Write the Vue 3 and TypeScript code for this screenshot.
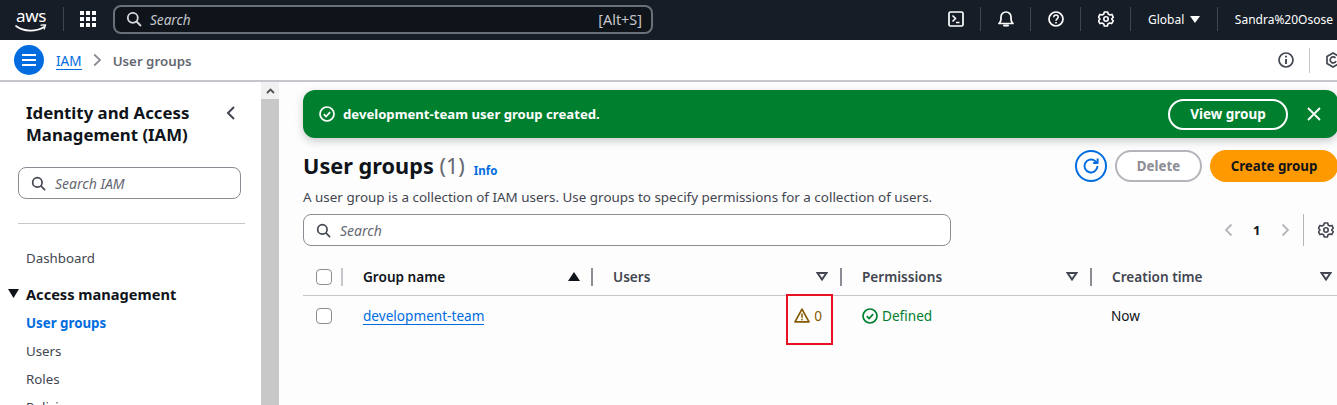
<script setup lang="ts">
interface Column {
  label: string;
  sorted?: boolean;
}

const columns: Column[] = [
  { label: 'Group name', sorted: true },
  { label: 'Users' },
  { label: 'Permissions' },
  { label: 'Creation time' },
];

const navItems = ['Users', 'Roles', 'Policies'];
</script>

<template>
  <div class="page">
    <header class="topbar">
      <div class="aws-logo">
        <span class="aws-word">aws</span>
        <svg class="aws-smile" width="32" height="9" viewBox="0 0 32 9" fill="none">
          <path d="M1 2c8 6 20 6 28 1" stroke="#fff" stroke-width="1.6" stroke-linecap="round" />
          <path d="M26 1.2l4.6-.4-1.4 4.2" stroke="#fff" stroke-width="1.3" stroke-linecap="round" stroke-linejoin="round" />
        </svg>
      </div>
      <span class="top-sep first"></span>
      <svg class="grid-icon" width="16" height="16" viewBox="0 0 16 16" fill="#fff">
        <rect x="0" y="0" width="4" height="4" /><rect x="6" y="0" width="4" height="4" /><rect x="12" y="0" width="4" height="4" />
        <rect x="0" y="6" width="4" height="4" /><rect x="6" y="6" width="4" height="4" /><rect x="12" y="6" width="4" height="4" />
        <rect x="0" y="12" width="4" height="4" /><rect x="6" y="12" width="4" height="4" /><rect x="12" y="12" width="4" height="4" />
      </svg>
      <div class="top-search">
        <svg width="16" height="16" viewBox="0 0 16 16" fill="none" stroke="#d5dbdb" stroke-width="1.8"><circle cx="6.8" cy="6.8" r="5" /><path d="M10.5 10.5l4.5 4.5" /></svg>
        <span class="top-search-text">Search</span>
        <span class="top-search-key">[Alt+S]</span>
      </div>
      <div class="top-right">
        <svg class="top-icon" width="16" height="16" viewBox="0 0 16 16" fill="none" stroke="#fff" stroke-width="1.7"><rect x="1" y="1" width="14" height="14" rx="1.5" /><path d="M4.5 4.5L7.5 7.5 4.5 10.5M8 11.5h3.5" stroke-width="1.5" /></svg>
        <span class="top-sep"></span>
        <svg class="top-icon" width="16" height="16" viewBox="0 0 16 16" fill="none" stroke="#fff" stroke-width="1.7"><path d="M1 12.5h14c-1.5-1.4-2-2.5-2-4.5V6A5 5 0 0 0 3 6v2c0 2-.5 3.1-2 4.5z" stroke-linejoin="round" /><path d="M6 14.6h4" stroke-width="2" stroke-linecap="round" /></svg>
        <span class="top-sep"></span>
        <svg class="top-icon" width="16" height="16" viewBox="0 0 16 16" fill="none" stroke="#fff" stroke-width="1.7"><circle cx="8" cy="8" r="7" /><path d="M5.8 6.2C5.8 4.9 6.8 4.1 8 4.1s2.2.8 2.2 2c0 1.8-2.2 1.8-2.2 3.6" stroke-width="1.5" /><path d="M8 11v1.4" stroke-width="1.6" /></svg>
        <span class="top-sep"></span>
        <svg class="top-icon" width="16" height="16" viewBox="0 0 16 16" fill="none" stroke="#fff" stroke-width="1.6" stroke-linejoin="round"><path d="M6.3 1h3.4l.5 2 1.8 1 2-.6L15.3 6.3l-1.5 1.5v.4l1.5 1.5-1.6 2.9-2-.6-1.8 1-.5 2H6.3l-.5-2-1.8-1-2 .6L.4 9.7l1.5-1.5v-.4L.4 6.3l1.6-2.9 2 .6 1.8-1z" /><circle cx="8" cy="8" r="2.2" /></svg>
        <span class="top-sep"></span>
        <span class="region">Global</span>
        <svg class="caret" width="10" height="7" viewBox="0 0 10 7" fill="#fff"><path d="M0 0h10L5 7z" /></svg>
        <span class="top-sep"></span>
        <span class="account">Sandra%20Osose</span>
      </div>
    </header>

    <div class="crumbs">
      <button class="menu-btn" type="button">
        <svg width="16" height="14" viewBox="0 0 16 14" stroke="#fff" stroke-width="2"><path d="M1 2h14M1 7h14M1 12h14" /></svg>
      </button>
      <a class="crumb-link" href="#">IAM</a>
      <svg class="crumb-chevron" width="9" height="14" viewBox="0 0 9 14" fill="none" stroke="#8c8c94" stroke-width="1.8"><path d="M1.2 1.5L7 7l-5.8 5.5" /></svg>
      <span class="crumb-current">User groups</span>
      <div class="crumb-tools">
        <svg width="16" height="16" viewBox="0 0 16 16" fill="none" stroke="#424650" stroke-width="1.7"><circle cx="8" cy="8" r="7" /><path d="M8 7v5M8 3.8v1.8" stroke-width="1.9" /></svg>
        <span class="crumb-sep"></span>
        <svg width="16" height="16" viewBox="0 0 16 16" fill="none" stroke="#424650" stroke-width="1.7"><path d="M8 1l6 3.5v7L8 15l-6-3.5v-7z" /><path d="M10.5 6A3 3 0 1 0 11 9" /></svg>
      </div>
    </div>

    <div class="body">
      <aside class="sidebar">
        <div class="side-head">
          <h2 class="side-title">Identity and Access Management (IAM)</h2>
          <svg class="side-close" width="10" height="14" viewBox="0 0 10 14" fill="none" stroke="#424650" stroke-width="2"><path d="M8 1L2 7l6 6" /></svg>
        </div>
        <div class="input side-search">
          <svg width="15" height="15" viewBox="0 0 16 16" fill="none" stroke="#424650" stroke-width="1.8"><circle cx="6.8" cy="6.8" r="5" /><path d="M10.5 10.5l4.5 4.5" /></svg>
          <span>Search IAM</span>
        </div>
        <hr class="side-rule" />
        <a class="nav-link dash" href="#">Dashboard</a>
        <div class="nav-section">
          <svg class="nav-caret" width="11" height="9" viewBox="0 0 11 9" fill="#0f141a"><path d="M0 0h11L5.5 9z" /></svg>
          <span>Access management</span>
        </div>
        <a class="nav-link active" href="#">User groups</a>
        <a v-for="item in navItems" :key="item" class="nav-link" href="#">{{ item }}</a>
      </aside>

      <div class="scrollbar">
        <div class="scroll-btn">
          <svg width="9" height="6" viewBox="0 0 9 6" fill="none" stroke="#505050" stroke-width="1.8"><path d="M1 5l3.5-3.5L8 5" /></svg>
        </div>
      </div>

      <main class="main">
        <div class="flash">
          <svg width="16" height="16" viewBox="0 0 16 16" fill="none" stroke="#fff" stroke-width="1.7"><circle cx="8" cy="8" r="7" /><path d="M4.8 8.2l2.3 2.3 4-4.4" /></svg>
          <span class="flash-text">development-team user group created.</span>
          <button class="flash-btn" type="button">View group</button>
          <svg class="flash-close" width="14" height="14" viewBox="0 0 14 14" stroke="#fff" stroke-width="1.8"><path d="M1 1l12 12M13 1L1 13" /></svg>
        </div>

        <div class="head-row">
          <div class="head-text">
            <h1 class="title">User groups&nbsp;<span class="count">(1)</span><a class="info" href="#">Info</a></h1>
            <p class="desc">A user group is a collection of IAM users. Use groups to specify permissions for a collection of users.</p>
          </div>
          <div class="actions">
            <button class="refresh" type="button">
              <svg width="18" height="18" viewBox="0 0 18 18" fill="none" stroke="#006ce0" stroke-width="1.9"><path d="M15.5 9a6.5 6.5 0 1 1-2.2-4.9L15.5 6" /><path d="M15.6 1.6V6h-4.4" stroke-linejoin="round" /></svg>
            </button>
            <button class="delete" type="button" disabled>Delete</button>
            <button class="create" type="button">Create group</button>
          </div>
        </div>

        <div class="filter-row">
          <div class="input table-search">
            <svg width="15" height="15" viewBox="0 0 16 16" fill="none" stroke="#424650" stroke-width="1.8"><circle cx="6.8" cy="6.8" r="5" /><path d="M10.5 10.5l4.5 4.5" /></svg>
            <span>Search</span>
          </div>
          <div class="pager">
            <svg width="9" height="14" viewBox="0 0 9 14" fill="none" stroke="#b4b4bb" stroke-width="1.8"><path d="M7.5 1.5L2 7l5.5 5.5" /></svg>
            <span class="page-num">1</span>
            <svg width="9" height="14" viewBox="0 0 9 14" fill="none" stroke="#b4b4bb" stroke-width="1.8"><path d="M1.5 1.5L7 7l-5.5 5.5" /></svg>
            <span class="pager-sep"></span>
            <svg width="16" height="16" viewBox="0 0 16 16" fill="none" stroke="#424650" stroke-width="1.6" stroke-linejoin="round"><path d="M6.3 1h3.4l.5 2 1.8 1 2-.6L15.3 6.3l-1.5 1.5v.4l1.5 1.5-1.6 2.9-2-.6-1.8 1-.5 2H6.3l-.5-2-1.8-1-2 .6L.4 9.7l1.5-1.5v-.4L.4 6.3l1.6-2.9 2 .6 1.8-1z" /><circle cx="8" cy="8" r="2.2" /></svg>
          </div>
        </div>

        <div class="table">
          <div class="th check-cell"><span class="checkbox"></span></div>
          <div v-for="col in columns" :key="col.label" class="th" :class="{ sorted: col.sorted }">
            <span class="th-sep"></span>
            <span class="th-label">{{ col.label }}</span>
            <svg v-if="col.sorted" class="sort" width="12" height="9" viewBox="0 0 12 9" fill="#0f141a"><path d="M6 0l6 9H0z" /></svg>
            <svg v-else class="sort" width="12" height="9" viewBox="0 0 12 9" fill="none" stroke="#424650" stroke-width="2"><path d="M1.5 1h9L6 7.5z" /></svg>
          </div>

          <div class="td check-cell"><span class="checkbox"></span></div>
          <div class="td"><a class="group-link" href="#">development-team</a></div>
          <div class="td users-cell">
            <div class="warn">
              <svg width="16" height="15" viewBox="0 0 16 15" fill="none" stroke="#855900" stroke-width="1.7" stroke-linejoin="round"><path d="M8 1.2L15 13.8H1z" /><path d="M8 5.5v4.2M8 10.8v1.5" stroke-width="1.5" /></svg>
              <span>0</span>
            </div>
            <span class="highlight"></span>
          </div>
          <div class="td raised">
            <div class="defined">
              <svg width="16" height="16" viewBox="0 0 16 16" fill="none" stroke="#00802f" stroke-width="1.7"><circle cx="8" cy="8" r="7" /><path d="M4.8 8.2l2.3 2.3 4-4.4" /></svg>
              <span>Defined</span>
            </div>
          </div>
          <div class="td raised now">Now</div>
        </div>
      </main>
    </div>
  </div>
</template>

<style>
html, body {
  margin: 0;
  overflow: hidden;
}
</style>

<style scoped>
.page {
  width: 1337px;
  height: 405px;
  overflow: hidden;
  display: flex;
  flex-direction: column;
  font-family: "Noto Sans", "Open Sans", sans-serif;
  font-size: 14px;
  color: #0f141a;
  background: #fff;
}
h1, h2, p { margin: 0; }
a { text-decoration: none; }
button { font-family: inherit; cursor: pointer; }

/* top bar */
.topbar {
  height: 40px;
  flex: none;
  box-sizing: border-box;
  display: flex;
  align-items: center;
  padding: 0 0 2px 15px;
  background: #161d26;
  color: #fff;
}
.aws-logo {
  position: relative;
  width: 32px;
  height: 28px;
  margin-top: 2px;
}
.aws-word {
  display: block;
  font-size: 17px;
  line-height: 19px;
  letter-spacing: -0.3px;
  text-align: center;
}
.aws-smile {
  position: absolute;
  left: 0;
  top: 18px;
}
.top-sep {
  width: 1px;
  height: 24px;
  background: #3f4650;
}
.top-sep.first { margin-left: 16px; }
.grid-icon { margin-left: 16px; }
.top-search {
  width: 540px;
  height: 29px;
  box-sizing: border-box;
  margin-left: 17px;
  padding: 0 9px 0 11px;
  display: flex;
  align-items: center;
  background: #0f141a;
  border: 2px solid #6b6f78;
  border-radius: 8px;
  color: #c6c6cd;
  font-size: 13.6px;
}
.top-search-text {
  margin-left: 8px;
  font-style: italic;
}
.top-search-key {
  margin-left: auto;
  font-size: 14.4px;
}
.top-right {
  margin-left: auto;
  display: flex;
  align-items: center;
  font-size: 12px;
}
.top-right .top-icon { margin: 0 16.5px; }
.top-right .top-icon:first-child { margin-left: 0; }
.region { margin-left: 17px; }
.caret { margin: 0 17px 0 6px; }
.account { margin: 0 4px 0 16.5px; }

/* breadcrumbs */
.crumbs {
  height: 42px;
  flex: none;
  box-sizing: border-box;
  display: flex;
  align-items: center;
  padding-left: 14px;
  border-bottom: 2px solid #c6c6cd;
  background: #fff;
}
.menu-btn {
  width: 30px;
  height: 30px;
  padding: 0;
  display: grid;
  place-items: center;
  border: none;
  border-radius: 50%;
  background: #006ce0;
}
.crumb-link {
  margin-left: 12px;
  color: #006ce0;
  font-size: 13.6px;
  line-height: 17px;
  border-bottom: 1px solid #006ce0;
  position: relative;
  top: 1px;
}
.crumb-chevron { margin: 0 11px 0 11px; }
.crumb-current {
  color: #656871;
  font-size: 13.3px;
  font-weight: 600;
  position: relative;
  top: 1px;
}
.crumb-tools {
  margin-left: auto;
  margin-right: -4px;
  display: flex;
  align-items: center;
  gap: 15px;
}
.crumb-sep {
  width: 1px;
  height: 25px;
  background: #c6c6cd;
}

/* body */
.body {
  flex: 1;
  min-height: 0;
  display: flex;
}
.sidebar {
  width: 261px;
  flex: none;
  box-sizing: border-box;
  padding: 20px 16px 0 26px;
  background: #fff;
}
.side-head {
  display: flex;
  justify-content: space-between;
  align-items: flex-start;
}
.side-title {
  width: 185px;
  font-size: 16.8px;
  line-height: 22px;
  font-weight: 700;
  color: #0f141a;
}
.side-close {
  margin: 4px 9px 0 0;
}
.input {
  box-sizing: border-box;
  display: flex;
  align-items: center;
  gap: 9px;
  height: 32px;
  padding-left: 12px;
  background: #fff;
  border: 1px solid #8c8c94;
  border-radius: 8px;
  color: #656871;
  font-size: 14px;
  font-style: italic;
}
.side-search {
  width: 223px;
  margin: 21px 0 0 -8px;
}
.side-rule {
  width: 227px;
  margin: 24px 0 0 -8px;
  border: none;
  border-top: 1px solid #c6c6cd;
}
.nav-link {
  display: block;
  color: #424650;
  font-size: 13.3px;
  line-height: 28px;
}
.nav-link.dash { margin-top: 20px; }
.nav-link.active {
  color: #006ce0;
  font-weight: 700;
  line-height: 28px;
  margin-top: 4px;
}
.nav-section {
  position: relative;
  margin-top: 11px;
  font-size: 14.6px;
  font-weight: 700;
  line-height: 22px;
}
.nav-caret {
  position: absolute;
  left: -18px;
  top: 6px;
}

/* fake scrollbar */
.scrollbar {
  width: 18px;
  flex: none;
  background: #c8c8c8;
}
.scroll-btn {
  height: 17px;
  display: grid;
  place-items: center;
  background: #f1f1f1;
}

/* main column */
.main {
  flex: 1;
  min-width: 0;
  box-sizing: border-box;
  padding: 8px 0 0 24px;
  background: #fdfdfd;
}
.flash {
  height: 48px;
  margin-right: -1px;
  box-sizing: border-box;
  display: flex;
  align-items: center;
  padding: 0 17px 0 16px;
  background: #00802f;
  border-radius: 12px;
  box-shadow: 0 3px 8px rgba(15, 20, 26, 0.22);
  color: #fff;
}
.flash-text {
  margin-left: 8px;
  font-size: 13.15px;
  font-weight: 700;
}
.flash-btn {
  width: 120px;
  height: 31px;
  margin-left: auto;
  padding: 0;
  background: transparent;
  border: 2px solid #fff;
  border-radius: 16px;
  color: #fff;
  font-size: 13.5px;
  font-weight: 700;
}
.flash-close { margin-left: 19px; }

.head-row {
  margin-top: 12px;
  display: flex;
  justify-content: space-between;
  align-items: flex-start;
}
.title {
  display: flex;
  align-items: baseline;
  font-size: 21.7px;
  line-height: 32px;
  font-weight: 700;
  white-space: pre;
}
.count {
  color: #656871;
  font-weight: 400;
}
.info {
  margin-left: 9px;
  color: #006ce0;
  font-size: 11.5px;
  font-weight: 700;
  position: relative;
  top: 1px;
}
.desc {
  margin-top: 2px;
  font-size: 13.43px;
  line-height: 18px;
  color: #424650;
  white-space: nowrap;
}
.actions {
  display: flex;
  align-items: center;
}
.actions button {
  height: 32px;
  padding: 0;
  font-size: 13.3px;
  font-weight: 700;
  border-radius: 16px;
}
.actions .refresh {
  width: 32px;
  display: grid;
  place-items: center;
  background: #fff;
  border: 2px solid #006ce0;
  border-radius: 50%;
}
.actions .delete {
  width: 87px;
  margin-left: 8px;
  background: #fff;
  border: 2px solid #b4b4bb;
  color: #8c8c94;
  cursor: default;
}
.actions .create {
  width: 128px;
  margin: 0 -1px 0 8px;
  background: #ff9900;
  border: none;
  color: #0f141a;
}

.filter-row {
  margin-top: 8px;
  display: flex;
  align-items: center;
  justify-content: space-between;
}
.table-search {
  width: 648px;
  color: #656871;
}
.pager {
  display: flex;
  align-items: center;
  margin-right: 3px;
}
.page-num {
  width: 8px;
  margin: 0 20px;
  font-size: 13px;
  font-weight: 700;
}
.pager-sep {
  width: 1px;
  height: 32px;
  margin: 0 14px 0 13px;
  background: #b4b4bb;
}

/* table */
.table {
  margin-top: 12px;
  display: grid;
  grid-template-columns: 39px 250px 249px 250px 246px;
  font-size: 13.6px;
}
.th {
  position: relative;
  height: 38px;
  box-sizing: border-box;
  display: flex;
  align-items: center;
  padding: 0 5px 0 21px;
  border-bottom: 1px solid #c6c6cd;
  color: #424650;
  font-weight: 600;
}
.th.sorted { color: #0f141a; }
.th-sep {
  position: absolute;
  left: -1px;
  top: 10px;
  width: 2px;
  height: 18px;
  background: #8c8c94;
}
.th:nth-child(2) .th-sep { background: #c6c6cd; }
.sort { margin-left: auto; }
.th.sorted .sort { margin-right: 7px; }
.th:not(.sorted) .sort { margin-right: 8px; }
.th:nth-child(5) .sort { margin-right: 0; }
.check-cell {
  padding: 0 0 0 13px;
}
.checkbox {
  width: 14px;
  height: 14px;
  background: #fff;
  border: 1px solid #8c8c94;
  border-radius: 4px;
}
.td {
  position: relative;
  height: 40px;
  box-sizing: border-box;
  display: flex;
  align-items: center;
  padding-left: 21px;
  color: #0f141a;
}
.td.raised { padding-bottom: 1px; }
.td.check-cell { padding-left: 13px; }
.td.now { padding-left: 20px; }
.group-link {
  color: #006ce0;
  line-height: 17px;
  border-bottom: 1px solid #006ce0;
}
.users-cell {
  justify-content: flex-end;
  padding: 0 19px 1px 0;
}
.warn {
  display: flex;
  align-items: center;
  gap: 4px;
  color: #855900;
}
.highlight {
  position: absolute;
  left: 194px;
  top: -2px;
  width: 47px;
  height: 51px;
  box-sizing: border-box;
  border: 2px solid #e81123;
}
.defined {
  display: flex;
  align-items: center;
  gap: 4px;
  color: #00802f;
}
</style>
